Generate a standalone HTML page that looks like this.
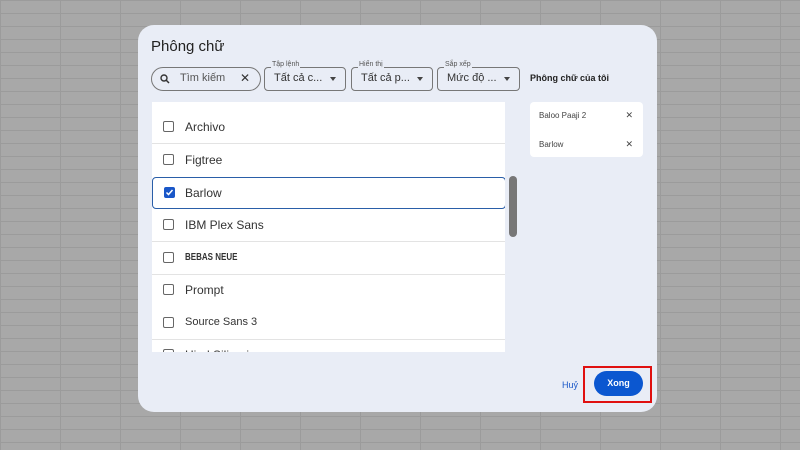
<!DOCTYPE html><html><head><style>
body{margin:0;width:800px;height:450px;overflow:hidden;font-family:"Liberation Sans",sans-serif;
background-color:#a8a8a8;background-image:linear-gradient(90deg,#9b9b9b 1px,transparent 1px),linear-gradient(#9b9b9b 1px,transparent 1px);background-size:60px 13px;background-position:0 0;position:relative}
.dlg{position:absolute;left:138px;top:25px;width:519px;height:387px;background:#e9edf6;border-radius:16px}
.a{position:absolute}
.t{left:13px;top:13px;font-size:15px;color:#222}
.box{position:absolute;top:42px;height:22px;border:1px solid #777;border-radius:4px;font-size:11px;color:#333}
.box .l{position:absolute;top:-7px;left:6px;background:#e9edf6;font-size:7px;color:#555;padding:0 1px}
.box .v{position:absolute;left:9px;top:4px}
.box .ar{position:absolute;right:9px;top:9px;border:3px solid transparent;border-top:4px solid #444}
.list{left:14px;top:77px;width:353px;height:250px;background:#fff;overflow:hidden}
.row{position:absolute;left:0;width:353px;height:32px;font-size:12px;color:#333}
.row .cb{position:absolute;left:11px;top:10px;width:9px;height:9px;border:1.5px solid #666;border-radius:2px}
.row .n{position:absolute;left:33px;top:9px}
.sep{border-bottom:1px solid #e3e3e3}
</style></head><body>
<div class="dlg">
<div class="a t">Phông chữ</div>
<div class="box" style="left:13px;width:108px;border-radius:12px"><svg class="a" style="left:8px;top:6px" width="10" height="10" viewBox="0 0 10 10"><circle cx="4" cy="4" r="3" fill="none" stroke="#333" stroke-width="1.4"/><path d="M6 6L9 9" stroke="#333" stroke-width="1.5"/></svg><span class="v" style="left:28px;color:#555">Tìm kiếm</span><span class="a" style="left:88px;top:3px;font-size:12px">✕</span></div>
<div class="box" style="left:126px;width:80px"><span class="l">Tập lệnh</span><span class="v">Tất cả c...</span><span class="ar"></span></div>
<div class="box" style="left:213px;width:80px"><span class="l">Hiển thị</span><span class="v">Tất cả p...</span><span class="ar"></span></div>
<div class="box" style="left:299px;width:81px"><span class="l">Sắp xếp</span><span class="v">Mức độ ...</span><span class="ar"></span></div>
<div class="a" style="left:392px;top:48px;font-size:9px;color:#222;font-weight:bold">Phông chữ của tôi</div>
<div class="a" style="left:392px;top:77px;width:113px;height:55px;background:#fff;border-radius:4px;font-size:8px;color:#444">
<span class="a" style="left:9px;top:9px">Baloo Paaji 2</span><span class="a" style="right:10px;top:8px;font-size:9px">✕</span>
<span class="a" style="left:9px;top:38px">Barlow</span><span class="a" style="right:10px;top:37px;font-size:9px">✕</span></div>
<div class="a list">
<div class="row sep" style="top:9px"><div class="cb"></div><span class="n">Archivo</span></div>
<div class="row" style="top:42px"><div class="cb"></div><span class="n">Figtree</span></div>
<div class="row" style="top:75px;border:1.5px solid #2a5ea8;border-radius:4px;box-sizing:border-box;width:354px"><div class="cb" style="background:#1a57c8;border-color:#1a57c8;top:9px"><svg class="a" style="left:0;top:0" width="9" height="9"><path d="M1.5 4.5L3.5 6.5L7.5 2" stroke="#fff" stroke-width="1.5" fill="none"/></svg></div><span class="n" style="top:8px;left:32px">Barlow</span></div>
<div class="row sep" style="top:107px"><div class="cb"></div><span class="n">IBM Plex Sans</span></div>
<div class="row sep" style="top:140px"><div class="cb"></div><span class="n" style="font-weight:bold;font-size:10px;top:10px;transform:scaleX(.8);transform-origin:left">BEBAS NEUE</span></div>
<div class="row" style="top:172px"><div class="cb"></div><span class="n">Prompt</span></div>
<div class="row sep" style="top:205px"><div class="cb"></div><span class="n" style="font-size:11px">Source Sans 3</span></div>
<div class="row" style="top:237px"><div class="cb"></div><span class="n">Hind Siliguri</span></div>
</div>
<div class="a" style="left:371px;top:151px;width:8px;height:61px;background:#777;border-radius:4px"></div>
<div class="a" style="left:424px;top:355px;font-size:9px;color:#1a57c8">Huỷ</div>
<div class="a" style="left:456px;top:346px;width:49px;height:25px;background:#0b57d0;border-radius:13px;color:#fff;font-size:9px;font-weight:bold;text-align:center;line-height:25px">Xong</div>
</div>
<div class="a" style="left:583px;top:366px;width:69px;height:37px;border:2px solid #e01010;box-sizing:border-box"></div>
</body></html>
